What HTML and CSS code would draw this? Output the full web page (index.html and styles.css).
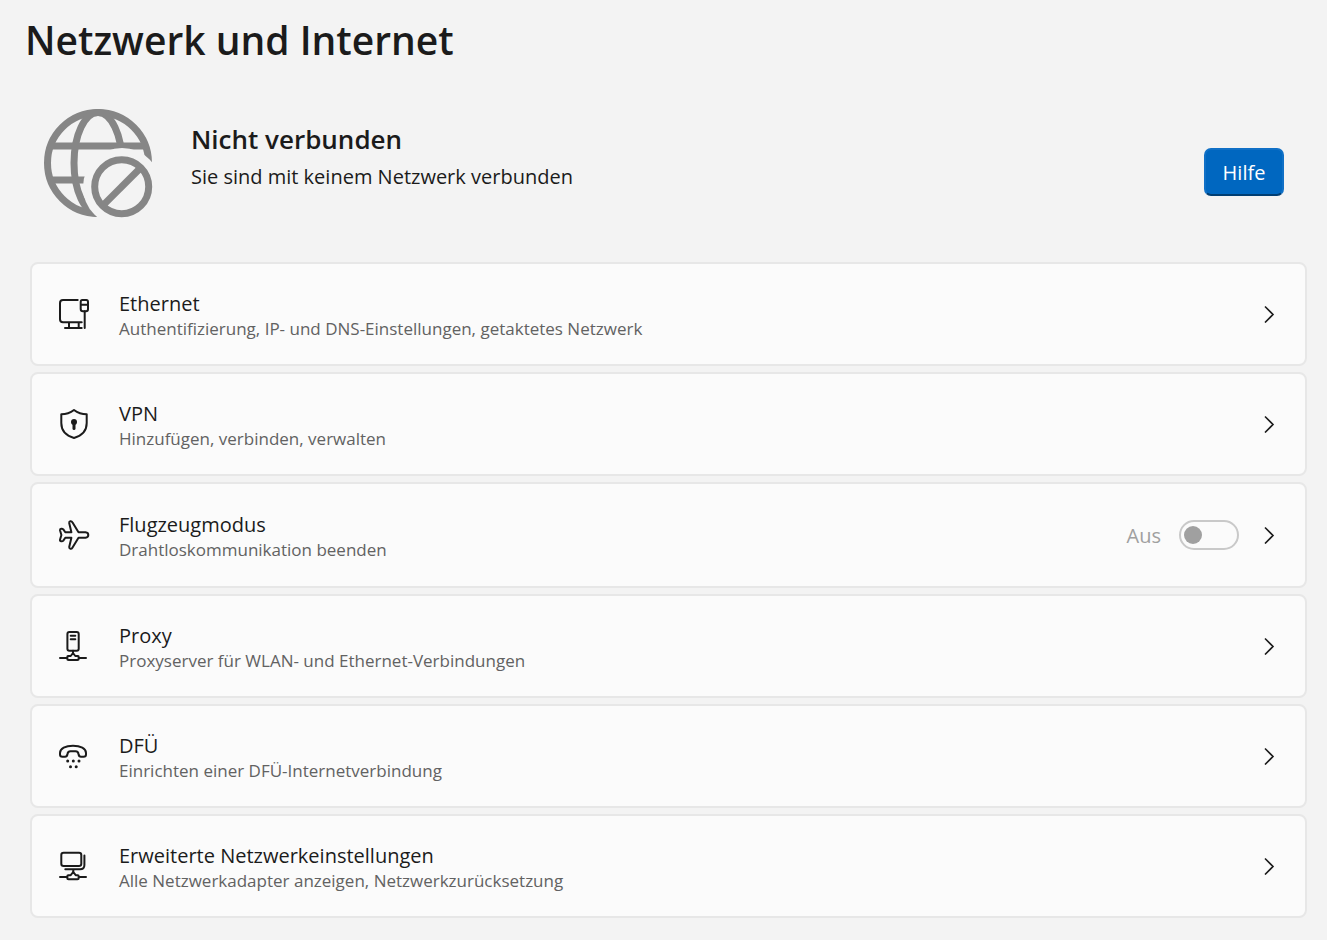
FILE: index.html
```html
<!DOCTYPE html>
<html lang="de">
<head>
    <meta charset="UTF-8">
    <meta name="viewport" content="width=device-width, initial-scale=1.0">
    <title>Netzwerk und Internet</title>
    <link rel="stylesheet" href="styles.css">
</head>
<body>
    <main class="page">
        <h1>Netzwerk und Internet</h1>

        <section class="status">
            <svg class="globe" viewBox="0 0 110 110">
                <mask id="cut" maskUnits="userSpaceOnUse" x="0" y="0" width="110" height="110" stroke="none">
                    <rect width="110" height="110" fill="#fff"/>
                    <circle cx="79" cy="79" r="39" fill="#000"/>
                </mask>
                <g mask="url(#cut)">
                    <circle cx="55" cy="55" r="50.5"/>
                    <ellipse cx="55" cy="55" rx="24" ry="50.5"/>
                    <path d="M7 38H103M7 72H103"/>
                </g>
                <circle cx="78.7" cy="78.7" r="27"/>
                <path d="M60 97.4L97.4 60"/>
            </svg>
            <div class="status-text">
                <h2>Nicht verbunden</h2>
                <p>Sie sind mit keinem Netzwerk verbunden</p>
            </div>
            <button class="help" type="button">Hilfe</button>
        </section>

        <div class="list">
            <a class="card" href="#">
                <svg class="icon" viewBox="0 0 32 32">
                    <path d="M19.7 2H5Q2 2 2 5V21.3Q2 24.3 5 24.3H23.7M11 24.3V30M20.7 24.3V30M7 30H23.7M26.7 13.3V30"/>
                    <path d="M24.3 2H28.3Q30 2 30 4V11Q30 13.3 28 13.3H25Q22.7 13.3 22.7 11V4Q22.7 2 24.3 2ZM22.7 6.7H30"/>
                </svg>
                <div class="text">
                    <div class="name">Ethernet</div>
                    <div class="desc">Authentifizierung, IP- und DNS-Einstellungen, getaktetes Netzwerk</div>
                </div>
                <svg class="chevron" viewBox="0 0 12 18"><path d="M2 1.5L10 9.5L2 17.5"/></svg>
            </a>

            <a class="card" href="#">
                <svg class="icon" viewBox="0 0 32 32">
                    <path d="M16 2C12.5 4.7 8 6.3 3.3 6.3V15C3.3 22.5 7.5 27.5 16 30C24.5 27.5 28.7 22.5 28.7 15V6.3C24 6.3 19.5 4.7 16 2Z"/>
                    <circle class="solid" cx="16" cy="14" r="3"/>
                    <path class="thick" d="M16 15V20.5"/>
                </svg>
                <div class="text">
                    <div class="name">VPN</div>
                    <div class="desc">Hinzufügen, verbinden, verwalten</div>
                </div>
                <svg class="chevron" viewBox="0 0 12 18"><path d="M2 1.5L10 9.5L2 17.5"/></svg>
            </a>

            <div class="card has-toggle">
                <svg class="icon" viewBox="0 0 32 32">
                    <path d="M20.5 13.3H27.5Q30.3 13.6 30.3 16T27.5 18.7H20.5L14.4 28.7Q13.6 30 12.3 29.7T11.2 28L13.4 18.7H7.3L5.3 21.6Q4.6 22.5 3.2 22.3T2 20.8L3.4 16L2 11.2Q1.9 9.9 3.2 9.7T5.3 10.4L7.3 13.3H13.4L11.2 4Q11 2.5 12.3 2.2T14.4 3.3Z"/>
                </svg>
                <a class="text" href="#">
                    <div class="name">Flugzeugmodus</div>
                    <div class="desc">Drahtloskommunikation beenden</div>
                </a>
                <label class="toggle">
                    <span>Aus</span>
                    <input type="checkbox" aria-label="Flugzeugmodus" disabled>
                </label>
                <svg class="chevron" viewBox="0 0 12 18"><path d="M2 1.5L10 9.5L2 17.5"/></svg>
            </div>

            <a class="card" href="#">
                <svg class="icon" viewBox="0 0 32 32">
                    <rect x="9.4" y="2" width="11.3" height="18.7" rx="2"/>
                    <path d="M12.7 5.7H17.3M12.7 9.3H17.3M15 20.7V23.3M2 28H9.3M20.7 28H28"/>
                    <path d="M15 23L12.7 26H10Q9.3 26 9.3 27V29Q9.3 30 10.5 30H19.5Q20.7 30 20.7 29V27Q20.7 26 20 26H17.3Z"/>
                </svg>
                <div class="text">
                    <div class="name">Proxy</div>
                    <div class="desc">Proxyserver für WLAN- und Ethernet-Verbindungen</div>
                </div>
                <svg class="chevron" viewBox="0 0 12 18"><path d="M2 1.5L10 9.5L2 17.5"/></svg>
            </a>

            <a class="card" href="#">
                <svg class="icon" viewBox="0 0 32 32">
                    <path d="M2 13C2 8.5 7.5 5.7 15 5.7S28 8.5 28 13V14.5C28 16 27 16.7 25.5 16.7H23C21.5 16.7 20.8 15.8 20.6 14.5C20.4 12.5 19.5 11.3 17.5 11.3H12.5C10.5 11.3 9.6 12.5 9.4 14.5C9.2 15.8 8.5 16.7 7 16.7H4.5C3 16.7 2 16 2 14.5Z"/>
                    <g class="solid">
                        <circle cx="9.7" cy="21" r="1.5"/>
                        <circle cx="15.3" cy="21" r="1.5"/>
                        <circle cx="21" cy="21" r="1.5"/>
                        <circle cx="12.5" cy="26.7" r="1.5"/>
                        <circle cx="18.2" cy="26.7" r="1.5"/>
                    </g>
                </svg>
                <div class="text">
                    <div class="name">DFÜ</div>
                    <div class="desc">Einrichten einer DFÜ-Internetverbindung</div>
                </div>
                <svg class="chevron" viewBox="0 0 12 18"><path d="M2 1.5L10 9.5L2 17.5"/></svg>
            </a>

            <a class="card" href="#">
                <svg class="icon" viewBox="0 0 32 32">
                    <rect x="3.3" y="2.7" width="20" height="13.3" rx="2.3"/>
                    <path d="M26.4 5.5V15Q26.4 19.3 22 19.3H7.3M15.3 19.3V22.5M2 27H9.3M20.7 27H28"/>
                    <path d="M15.2 22L12.7 25.2H10.3Q9.3 25.2 9.3 26.2V28.2Q9.3 29.2 10.5 29.2H19.5Q20.7 29.2 20.7 28.2V26.2Q20.7 25.2 19.7 25.2H17.7Z"/>
                </svg>
                <div class="text">
                    <div class="name">Erweiterte Netzwerkeinstellungen</div>
                    <div class="desc">Alle Netzwerkadapter anzeigen, Netzwerkzurücksetzung</div>
                </div>
                <svg class="chevron" viewBox="0 0 12 18"><path d="M2 1.5L10 9.5L2 17.5"/></svg>
            </a>
        </div>
    </main>
</body>
</html>
```
FILE: styles.css
```css
* {
    box-sizing: border-box;
}

body {
    margin: 0;
    background: #f3f3f3;
    color: #1b1b1b;
    font-family: "Open Sans", "Noto Sans", sans-serif;
    font-size: 20px;
}

h1, h2, p {
    margin: 0;
}

.page {
    padding: 12px 20px 22px 25px;
}

h1 {
    font-size: 39px;
    font-weight: 600;
    line-height: 56px;
}

/* connection status */
.status {
    display: flex;
    align-items: center;
    gap: 38px;
    padding: 40px 23px 44px 18px;
}

.globe {
    width: 110px;
    height: 110px;
    fill: none;
    stroke: #868686;
    stroke-width: 7;
}

.status-text {
    flex: 1;
    padding-bottom: 16px;
}

h2 {
    font-size: 26px;
    font-weight: 600;
    line-height: 44px;
}

.status p {
    line-height: 32px;
}

.help {
    width: 80px;
    height: 48px;
    margin-top: 18px;
    padding: 0;
    border: 2px solid #1070c6;
    border-bottom-color: #003e73;
    border-radius: 7px;
    background: #0067c0;
    color: #fff;
    font: inherit;
}

/* settings list */
.list {
    display: flex;
    flex-direction: column;
    gap: 6px;
    margin-left: 5px;
}

.card {
    display: flex;
    align-items: center;
    min-height: 104px;
    padding: 0 30px 0 26px;
    border: 2px solid #e7e7e7;
    border-radius: 8px;
    background: #fbfbfb;
    color: inherit;
    text-decoration: none;
}

.has-toggle {
    min-height: 106px;
}

.icon {
    width: 32px;
    height: 32px;
    margin-right: 29px;
    fill: none;
    stroke: #1b1b1b;
    stroke-width: 2;
    stroke-linecap: round;
    stroke-linejoin: round;
}

.icon .solid {
    fill: #1b1b1b;
    stroke: none;
}

.icon .thick {
    stroke-width: 3;
}

.text {
    flex: 1;
    padding-top: 4px;
    color: inherit;
    text-decoration: none;
}

.name {
    line-height: 26px;
}

.desc {
    color: #626262;
    font-size: 17px;
    line-height: 24px;
}

.toggle {
    display: flex;
    align-items: center;
    gap: 18px;
    margin-right: 24px;
    color: #a0a0a0;
}

.toggle input {
    appearance: none;
    display: flex;
    align-items: center;
    width: 60px;
    height: 30px;
    margin: 0;
    padding: 0 3px;
    border: 2px solid #c9c9c9;
    border-radius: 15px;
}

.toggle input::before {
    content: "";
    width: 18px;
    height: 18px;
    border-radius: 50%;
    background: #a0a0a0;
}

.chevron {
    width: 12px;
    height: 18px;
    fill: none;
    stroke: #1b1b1b;
    stroke-width: 1.6;
}
```
